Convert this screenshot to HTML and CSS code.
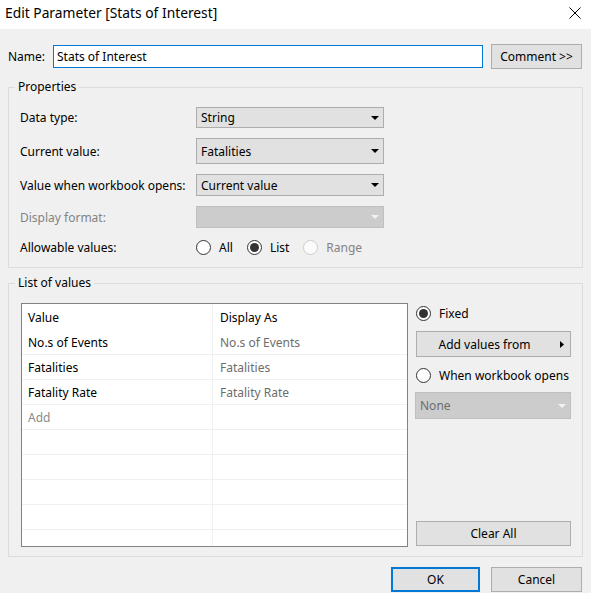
FILE: index.html
```
<!DOCTYPE html>
<html>
<head>
<meta charset="utf-8">
<link rel="stylesheet" href="styles.css">
</head>
<body>
<div class="dialog">
  <div class="titlebar">
    <span class="title">Edit Parameter [Stats of Interest]</span>
    <svg class="close" width="12" height="12" viewBox="0 0 12 12"><path d="M0.5 0.5 L11.5 11.5 M11.5 0.5 L0.5 11.5" stroke="#000" stroke-width="1" fill="none"/></svg>
  </div>
  <div class="body">
    <div class="name-row">
      <span class="name-label">Name:</span>
      <div class="textbox">Stats of Interest</div>
      <div class="btn comment-btn">Comment &gt;&gt;</div>
    </div>

    <fieldset class="group props">
      <legend>Properties</legend>
      <div class="prop-grid">
        <span class="lbl">Data type:</span>
        <div class="select"><span>String</span><svg class="arrow" width="8" height="4" viewBox="0 0 8 4"><polygon points="0,0 8,0 4,4" fill="#000"/></svg></div>
        <span class="lbl">Current value:</span>
        <div class="select"><span>Fatalities</span><svg class="arrow" width="8" height="4" viewBox="0 0 8 4"><polygon points="0,0 8,0 4,4" fill="#000"/></svg></div>
        <span class="lbl">Value when workbook opens:</span>
        <div class="select"><span>Current value</span><svg class="arrow" width="8" height="4" viewBox="0 0 8 4"><polygon points="0,0 8,0 4,4" fill="#000"/></svg></div>
        <span class="lbl disabled">Display format:</span>
        <div class="select select-disabled"><span></span><svg class="arrow" width="8" height="4" viewBox="0 0 8 4"><polygon points="0,0 8,0 4,4" fill="#f2f2f2"/></svg></div>
        <span class="lbl">Allowable values:</span>
        <div class="radios">
          <span class="radio-item"><span class="radio"></span>All</span>
          <span class="radio-item"><span class="radio checked"></span>List</span>
          <span class="radio-item disabled"><span class="radio radio-off"></span>Range</span>
        </div>
      </div>
    </fieldset>

    <fieldset class="group list">
      <legend>List of values</legend>
      <div class="list-content">
        <div class="table">
          <div class="trow head"><div class="c1">Value</div><div class="c2">Display As</div></div>
          <div class="trow"><div class="c1">No.s of Events</div><div class="c2">No.s of Events</div></div>
          <div class="trow"><div class="c1">Fatalities</div><div class="c2">Fatalities</div></div>
          <div class="trow"><div class="c1">Fatality Rate</div><div class="c2">Fatality Rate</div></div>
          <div class="trow"><div class="c1 add">Add</div><div class="c2"></div></div>
          <div class="trow"><div class="c1"></div><div class="c2"></div></div>
          <div class="trow"><div class="c1"></div><div class="c2"></div></div>
          <div class="trow"><div class="c1"></div><div class="c2"></div></div>
          <div class="trow"><div class="c1"></div><div class="c2"></div></div>
          <div class="trow"><div class="c1"></div><div class="c2"></div></div>
        </div>
        <div class="side">
          <span class="radio-item side-radio"><span class="radio checked"></span>Fixed</span>
          <div class="btn add-btn"><span class="add-text">Add values from</span><svg class="rarrow" width="4" height="7" viewBox="0 0 4 7"><polygon points="0,0 4,3.5 0,7" fill="#000"/></svg></div>
          <span class="radio-item side-radio second"><span class="radio"></span>When workbook opens</span>
          <div class="select select-disabled none-select"><span>None</span><svg class="arrow" width="8" height="4" viewBox="0 0 8 4"><polygon points="0,0 8,0 4,4" fill="#f2f2f2"/></svg></div>
          <div class="btn clear-btn">Clear All</div>
        </div>
      </div>
    </fieldset>

    <div class="footer">
      <div class="btn ok-btn">OK</div>
      <div class="btn cancel-btn">Cancel</div>
    </div>
  </div>
</div>
</body>
</html>
```
FILE: styles.css
```
* { box-sizing: border-box; }
html, body { margin: 0; padding: 0; }
body {
  width: 591px;
  height: 593px;
  overflow: hidden;
  font-family: "Noto Sans", "Open Sans", sans-serif;
  font-size: 12px;
  color: #000;
  background: #f0f0f0;
}
.dialog { width: 591px; height: 593px; display: flex; flex-direction: column; }

.titlebar {
  height: 29px;
  background: #fff;
  display: flex;
  align-items: center;
  justify-content: space-between;
  padding: 0 10px 4px 5px;
}
.title { font-size: 13.8px; }
.close { display: block; margin-top: 1px; }

.body { flex: 1; padding: 0 8px; display: flex; flex-direction: column; }

.name-row { display: flex; align-items: center; margin-top: 15px; height: 25px; }
.name-label { width: 45px; }
.textbox {
  width: 430px; height: 23px;
  background: #fff;
  border: 1px solid #0078d7;
  padding: 0 3px;
  display: flex; align-items: center;
}
.btn {
  background: #e1e1e1;
  border: 1px solid #adadad;
  display: flex; align-items: center; justify-content: center;
}
.comment-btn { width: 91px; height: 25px; margin-left: 8px; }

fieldset.group {
  margin: 0;
  border: 1px solid #dcdcdc;
  min-width: 0;
}
fieldset.group legend {
  padding: 0 3px;
  line-height: 16px;
  height: 16px;
}
.props { margin-top: 10px !important; padding: 12px 11px 11px 11px; }
.props legend { margin-left: -5px; }
.list { margin-top: 7px !important; padding: 12px 11px 9px 12px; }
.list legend { margin-left: -6px; }

.prop-grid {
  display: grid;
  grid-template-columns: 176px 188px;
  grid-template-rows: 21px 26px 22px 22px 18px;
  row-gap: 10px;
  align-items: center;
}
.lbl { white-space: nowrap; }
.disabled { color: #838383; }
.select {
  height: 100%;
  background: #e1e1e1;
  border: 1px solid #adadad;
  display: flex; align-items: center; justify-content: space-between;
  padding: 0 3px 0 4px;
}
.select .arrow { display: block; margin-right: 1px; }
.select-disabled { background: #cccccc; border-color: #bfbfbf; color: #6d6d6d; }

.radios { display: flex; align-items: center; gap: 0; height: 18px; }
.radio-item { display: flex; align-items: center; white-space: nowrap; }
.radios .radio-item { margin-right: 14px; }
.radio {
  width: 15px; height: 15px;
  border: 1px solid #333;
  border-radius: 50%;
  background: #fff;
  margin-right: 8px;
  display: flex; align-items: center; justify-content: center;
}
.radio.checked::after {
  content: "";
  width: 9px; height: 9px;
  border-radius: 50%;
  background: #333;
}
.radio-off { border-color: #cccccc; background: #fcfcfc; }

.list-content { display: flex; gap: 8px; height: 244px; }
.table {
  width: 387px; height: 244px;
  background: #fff;
  border: 1px solid #828282;
  overflow: hidden;
}
.trow { display: flex; height: 25px; flex-shrink: 0; border-bottom: 1px solid #f0f0f0; }
.trow.head { border-bottom: none; height: 26px; }
.c1, .c2 { display: flex; align-items: center; white-space: nowrap; }
.c1 { width: 191px; padding-left: 6px; border-right: 1px solid #f0f0f0; }
.c2 { flex: 1; padding-left: 7px; color: #6d6d6d; }
.head .c2 { color: #000; }
.add { color: #8a8a8a; }

.side { width: 155px; display: flex; flex-direction: column; }
.side-radio { height: 20px; }
.side-radio .radio { margin-right: 8px; }
.add-btn { height: 26px; margin-top: 8px; justify-content: space-between; padding-right: 6px; }
.add-text { flex: 1; text-align: center; padding-right: 8px; }
.rarrow { display: block; }
.second { margin-top: 8px; }
.none-select { height: 27px; margin-top: 7px; margin-left: -1px; width: 156px; }
.clear-btn { height: 25px; margin-top: auto; margin-bottom: 1px; }

.footer { display: flex; justify-content: flex-end; gap: 11px; margin-top: 10px; padding-right: 1px; }
.ok-btn { width: 89px; height: 25px; border: 2px solid #0078d7; }
.cancel-btn { width: 91px; height: 25px; }
```
